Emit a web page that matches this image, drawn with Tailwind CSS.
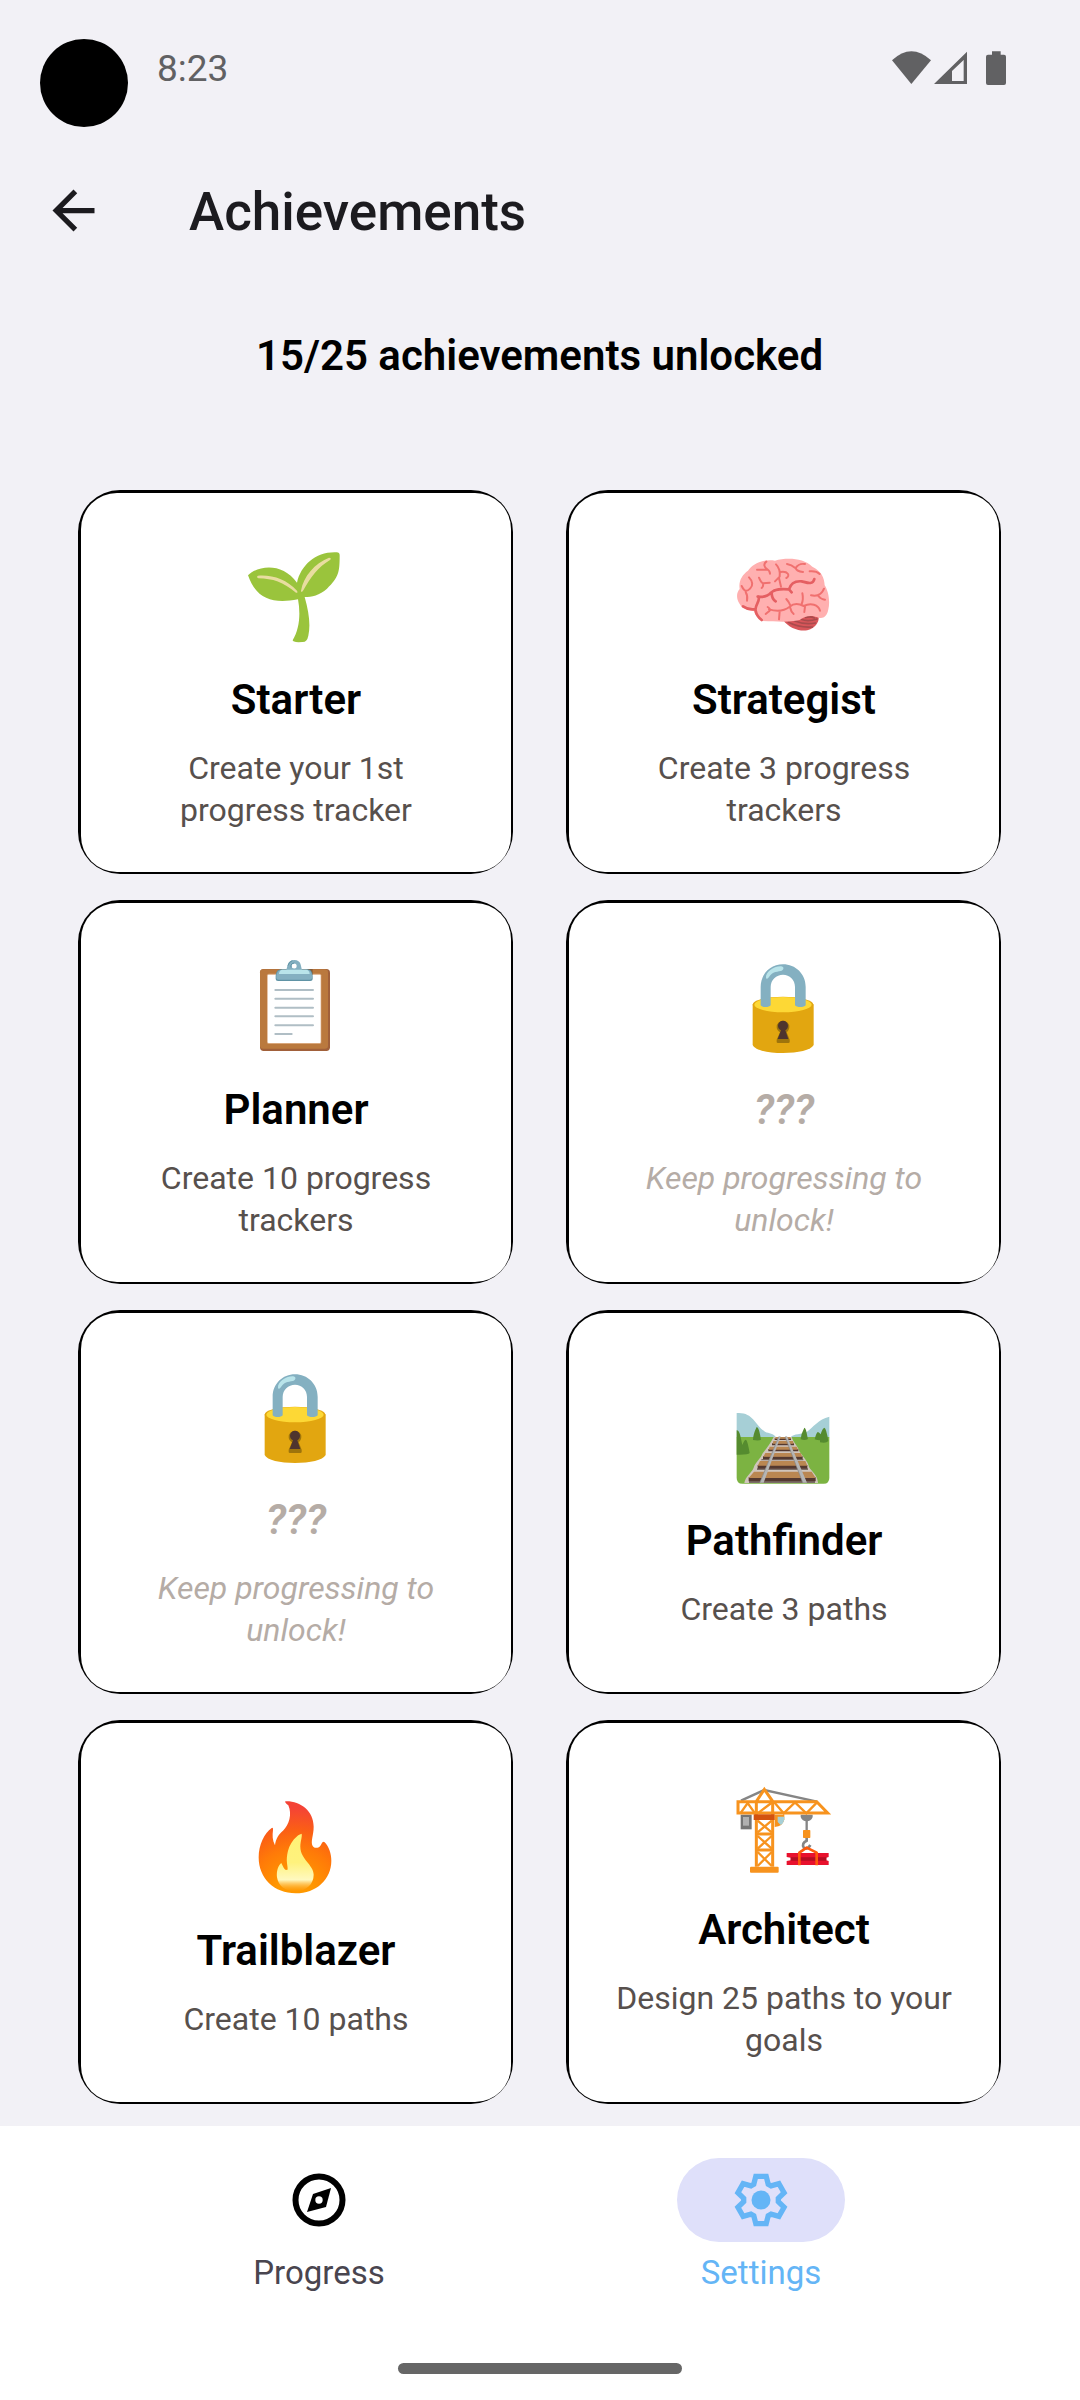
<!doctype html>
<html lang="en">
<head>
    <meta charset="utf-8" />
    <title>Achievements</title>
    <meta name="viewport" content="width=device-width, initial-scale=1.0" />
    <script src="https://cdn.jsdelivr.net/npm/@tailwindcss/browser@4"></script>
</head>

<body class="flex flex-col min-h-screen bg-[#f2f1f6] font-['Roboto',sans-serif] text-black">

    <!-- Shared icons -->
    <svg class="hidden" aria-hidden="true">
        <symbol id="lock" viewBox="529 204 288 288">
            <path fill="#e2a610" d="M579 340V462C586 478 625 486 670 486S754 478 762 462V340Z" />
            <ellipse cx="670" cy="341" rx="91" ry="24" fill="#e2a610" />
            <ellipse cx="670" cy="341" rx="86" ry="23" fill="#fdd835" />
            <path fill="#84b0c1" d="M603 343V288C603 248 633 220 670 220S738 248 738 288V343C734 350 710 350 706 343V288C706 266 690 251 670 251S633 266 633 288V343C629 350 607 350 603 343Z" />
            <path fill="#b9e4ea" d="M619 261C617 244 642 225 664 226C674 227 674 237 664 240C647 243 637 244 628 258C624 264 620 265 619 261Z" />
            <path fill="#9e740b" d="M651 408A19 19 0 0 1 689 408C689 416 684 421 681 424L690 446V454Q689 456 686 456H655Q651 456 651 453V446L661 424C655 420 651 415 651 408Z" />
            <path fill="#4e342e" d="M655 404A15 15 0 0 1 685 404C685 411 682 415 677 418L686 444H654L664 418C658 415 655 411 655 404Z" />
        </symbol>
    </svg>

    <!-- Status bar -->
    <div class="flex items-start justify-between pl-10 pr-[74px] pt-[39px]">
        <div class="flex">
            <div class="size-[88px] rounded-full bg-black"></div>
            <span class="ml-[29px] mt-2 text-[37px] leading-[44px] text-[#616163]">8:23</span>
        </div>
        <svg class="mt-3 w-[114px] h-[34px]" viewBox="96 92 342 102" fill="#616163">
            <path d="M96 120Q154 66 213 120L154 191Z" />
            <path fill-rule="evenodd" d="M222 191L321 94V191ZM276 182H311V119L276 152Z" />
            <path d="M396 93H422V103H432Q438 103 438 109V188Q438 194 432 194H384Q378 194 378 188V109Q378 103 384 103H396Z" />
        </svg>
    </div>

    <!-- App bar -->
    <header class="flex items-center h-16 mt-[51px] pl-[42px]">
        <button type="button" aria-label="Back" class="size-[63px]">
            <svg class="size-full" viewBox="0 0 24 24" fill="#1c1b1f">
                <path d="M20 11H7.83l5.59-5.59L12 4l-8 8 8 8 1.41-1.41L7.83 13H20v-2z" />
            </svg>
        </button>
        <h1 class="ml-[84px] pt-1 text-[53px] leading-[64px] font-medium text-[#1c1b1f]">Achievements</h1>
    </header>

    <main class="flex-1 pl-[78px] pr-[79px] pb-5">
        <p class="mt-[86px] text-center text-[42px] leading-[56px] font-semibold">15/25 achievements unlocked</p>

        <ul class="grid grid-cols-2 gap-x-[53px] gap-y-[26px] mt-[106px]">
            <li class="flex rounded-[42px] bg-black pt-[3px] pl-[3px] pr-[2px] pb-[2px]">
                <div class="flex flex-col flex-1 items-center justify-center min-h-[379px] px-[46px] rounded-[36px] bg-white text-center">
                    <svg class="size-24 mt-[14px] mb-[27px]" viewBox="85 51 288 288">
                        <path fill="#9ac43c" d="M85 130C118 98 190 92 232 152C244 98 290 58 351 61Q360 61 360 70C360 120 357 137 322 170C300 190 276 195 255 195C268 240 273 280 266 311Q262 331 248 330Q219 332 219 325C240 290 243 245 235 202C160 216 110 202 85 130Z" />
                        <path fill="#e8dda0" d="M115 131C160 128 200 142 232 176Q236 183 229 182C190 150 160 140 116 139Q109 134 115 131Z" />
                        <path fill="#e8dda0" d="M244 176C252 132 285 94 328 77Q336 77 332 83C295 105 272 136 251 175Q245 184 244 176Z" />
                    </svg>
                    <h2 class="mb-[19px] text-[42px] leading-[56px] font-semibold">Starter</h2>
                    <p class="text-[32px] leading-[42px] text-[#57504d]">Create your 1st progress tracker</p>
                </div>
            </li>
            <li class="flex rounded-[42px] bg-black pt-[3px] pl-[3px] pr-[2px] pb-[2px]">
                <div class="flex flex-col flex-1 items-center justify-center min-h-[379px] px-[46px] rounded-[36px] bg-white text-center">
                    <svg class="size-24 mt-[14px] mb-[27px]" viewBox="109 81 288 288" fill="none" stroke-linecap="round" stroke-linejoin="round">
                        <path fill="#d8565a" d="M250 294C270 322 310 332 332 322C352 310 358 298 357 284L320 278Z" />
                        <path stroke="#a94b4d" stroke-width="5" d="M266 301Q300 318 338 315M286 297Q315 309 347 303M304 292Q325 300 352 291M318 286Q332 282 344 288" />
                        <path fill="#ffb0b0" d="M189 297C174 290 166 277 162 267C142 266 127 258 120 246C109 230 110 212 120 201C116 176 128 158 145 146C160 126 190 110 226 116C262 106 312 108 338 134C365 148 374 166 375 190C386 206 392 238 386 262C383 282 370 292 357 287C330 276 312 286 300 294C265 302 230 298 189 297Z" />
                        <g stroke="#f0706f" stroke-width="6">
                            <path d="M200 119C190 126 194 136 202 141C210 146 211 150 211 155M172 143C182 143 192 143 202 143" />
                            <path d="M148 166C160 178 160 192 152 199C142 209 135 211 126 192M138 210Q145 222 142 236" />
                            <path d="M178 167Q184 182 190 184L210 182M190 184Q192 194 186 198" />
                            <path d="M229 127C240 138 242 148 240 164L226 178M242 150C266 146 272 162 260 168M238 168L244 194" />
                            <path d="M262 126C274 128 282 134 288 139M316 126C300 124 294 128 288 138Q290 148 310 150M330 148Q350 146 360 156" />
                            <path d="M334 220C350 224 366 218 373 200M356 222Q364 232 376 233" />
                            <path d="M204 255Q216 262 208 268L198 276M208 262C228 268 252 268 270 254C284 242 300 246 312 252C334 242 356 248 361 266M260 231Q268 240 272 250M308 214Q312 232 306 246M316 254L314 270M272 258Q274 270 282 276M240 268L238 292" />
                        </g>
                        <path stroke="#e55f62" stroke-width="8" d="M174 224C192 226 204 224 214 212C226 200 244 200 268 202C272 188 282 176 306 178C322 182 340 190 344 171M268 202L276 211M216 212Q216 230 228 238M176 224C184 236 164 250 168 266C170 278 176 286 186 294M130 253Q146 264 164 262" />
                    </svg>
                    <h2 class="mb-[19px] text-[42px] leading-[56px] font-semibold">Strategist</h2>
                    <p class="text-[32px] leading-[42px] text-[#57504d]">Create 3 progress trackers</p>
                </div>
            </li>
            <li class="flex rounded-[42px] bg-black pt-[3px] pl-[3px] pr-[2px] pb-[2px]">
                <div class="flex flex-col flex-1 items-center justify-center min-h-[379px] px-[46px] rounded-[36px] bg-white text-center">
                    <svg class="size-24 mt-[14px] mb-[27px]" viewBox="85 84 288 288">
                        <rect x="121" y="114" width="210" height="246" rx="11" fill="#a1603a" />
                        <rect x="121" y="115" width="204" height="238" rx="9" fill="#ba793e" />
                        <rect x="142" y="128" width="163" height="211" rx="5" fill="#d9a77c" />
                        <rect x="144" y="131" width="159" height="205" rx="3" fill="#fff" />
                        <path fill="#855c38" d="M264 114H279V131H264Z" />
                        <path stroke="#b0bec5" stroke-width="6" stroke-linecap="round" d="M167 177H280M167 203H280M167 230H280M167 256H280M167 283H280M167 309H216" />
                        <path fill="#5f93a5" d="M168 134Q170 115 184 115H264Q277 115 279 134V144Q279 150 272 150H175Q168 150 168 144Z" />
                        <path fill="#84b0c1" fill-rule="evenodd" d="M200 116C204 108 202 87 224 87S243 108 247 116H264Q276 118 277 134V141Q277 146 270 146H177Q170 146 170 141V134Q172 118 184 116ZM216 105A7 7 0 0 0 231 105A7 7 0 0 0 216 105Z" />
                        <path fill="#b9e4ea" d="M188 116H260Q270 118 270 129H178Q178 118 188 116Z" />
                        <path stroke="#5f93a5" stroke-width="3" fill="none" d="M214 109V103Q216 96 224 96M205 104Q208 92 218 89" />
                    </svg>
                    <h2 class="mb-[19px] text-[42px] leading-[56px] font-semibold">Planner</h2>
                    <p class="text-[32px] leading-[42px] text-[#57504d]">Create 10 progress trackers</p>
                </div>
            </li>
            <li class="flex rounded-[42px] bg-black pt-[3px] pl-[3px] pr-[2px] pb-[2px]">
                <div class="flex flex-col flex-1 items-center justify-center min-h-[379px] px-[46px] rounded-[36px] bg-white text-center">
                    <svg class="size-24 mt-[14px] mb-[27px]"><use href="#lock" /></svg>
                    <h2 class="mb-[19px] text-[42px] leading-[56px] font-semibold italic text-[#b5aca6]">???</h2>
                    <p class="text-[32px] leading-[42px] italic text-[#b5aca6]">Keep progressing to unlock!</p>
                </div>
            </li>
            <li class="flex rounded-[42px] bg-black pt-[3px] pl-[3px] pr-[2px] pb-[2px]">
                <div class="flex flex-col flex-1 items-center justify-center min-h-[379px] px-[46px] rounded-[36px] bg-white text-center">
                    <svg class="size-24 mt-[14px] mb-[27px]"><use href="#lock" /></svg>
                    <h2 class="mb-[19px] text-[42px] leading-[56px] font-semibold italic text-[#b5aca6]">???</h2>
                    <p class="text-[32px] leading-[42px] italic text-[#b5aca6]">Keep progressing to unlock!</p>
                </div>
            </li>
            <li class="flex rounded-[42px] bg-black pt-[3px] pl-[3px] pr-[2px] pb-[2px]">
                <div class="flex flex-col flex-1 items-center justify-center min-h-[379px] px-[46px] rounded-[36px] bg-white text-center">
                    <svg class="size-24 mt-[14px] mb-[27px]" viewBox="109 27 288 288">
                        <path fill="#a6cfd6" d="M111 96C160 92 166 132 196 152C208 158 222 156 229 169H111ZM389 107C356 114 340 140 322 152C306 162 282 156 273 169H389Z" />
                        <path fill="#7cb342" d="M111 168H389V290Q389 308 372 308H128Q111 308 111 290Z" />
                        <path fill="#558b2f" d="M111 148Q118 148 122 164L128 192Q134 176 139 176Q144 180 150 216Q146 222 111 221ZM171 138C178 138 182 164 184 176Q178 180 160 177Q160 160 171 138ZM314 140C320 142 322 162 325 174Q316 180 303 175Q304 158 314 140ZM374 140Q380 142 386 180Q380 188 361 184V178Q352 178 345 175Q350 154 355 153Q360 155 363 160Q368 142 374 140Z" />
                        <path fill="#d0c5bc" d="M222 168H276C282 186 296 198 300 212C318 236 326 246 328 258C336 272 354 282 355 306H134C138 284 156 276 162 260C166 244 184 232 188 218C202 202 214 184 222 168Z" />
                        <path fill="#7b6d66" d="M186 234H311V238H184ZM172 262H325V267H172ZM148 300H346V306H148Z" />
                        <path fill="#543930" d="M225 172H274V177H225ZM217 187H283V193H217ZM206 204H296V211H206ZM190 226H309V235H190ZM174 252H323V263H174ZM147 289H348V301H147Z" />
                        <path fill="#ba8752" d="M228 168H272L274 173H226ZM221 180H280L282 188H219ZM210 197H291L295 206H207ZM197 216H303L308 227H191ZM181 240H317L323 254H174ZM163 272H336L348 291H147Z" />
                        <path fill="#b5b5b5" d="M237 166H243L192 305H180ZM256 166H262L322 305H309Z" />
                        <path stroke="#858585" stroke-width="2" d="M237 168L181 304M256 168L309 304" />
                    </svg>
                    <h2 class="mb-[19px] text-[42px] leading-[56px] font-semibold">Pathfinder</h2>
                    <p class="text-[32px] leading-[42px] text-[#57504d]">Create 3 paths</p>
                </div>
            </li>
            <li class="flex rounded-[42px] bg-black pt-[3px] pl-[3px] pr-[2px] pb-[2px]">
                <div class="flex flex-col flex-1 items-center justify-center min-h-[379px] px-[46px] rounded-[36px] bg-white text-center">
                    <svg class="size-24 mt-[14px] mb-[27px]" viewBox="85 60 288 288">
                        <defs>
                            <radialGradient id="flame" gradientUnits="userSpaceOnUse" cx="226" cy="340" r="270">
                                <stop offset=".2" stop-color="#ff9800" />
                                <stop offset=".5" stop-color="#ff7a08" />
                                <stop offset=".7" stop-color="#fb6014" />
                                <stop offset=".95" stop-color="#f44336" />
                            </radialGradient>
                            <linearGradient id="core" x1="0" y1="0" x2="0" y2="1">
                                <stop offset="0" stop-color="#fff176" />
                                <stop offset=".5" stop-color="#fff27d" />
                                <stop offset=".8" stop-color="#fff9c0" />
                                <stop offset="1" stop-color="#ff9800" stop-opacity=".3" />
                            </linearGradient>
                        </defs>
                        <path fill="url(#flame)" d="M197 64C240 62 282 92 282 140C282 166 272 184 279 198C284 206 298 206 304 194Q309 182 315 187C328 200 335 222 335 242C335 298 290 340 228 340C164 340 117 296 117 232C117 194 134 160 156 144Q161 142 160 150C158 166 158 180 166 196C168 176 178 162 190 152C208 134 218 104 206 76Q194 67 197 64Z" />
                        <path fill="url(#core)" d="M246 161C228 166 198 198 202 250C204 266 206 270 200 270C192 268 190 258 185 249C176 256 170 272 172 292C176 318 196 334 226 334C260 334 282 312 282 284C282 254 242 238 242 200C242 184 248 170 246 161Z" />
                    </svg>
                    <h2 class="mb-[19px] text-[42px] leading-[56px] font-semibold">Trailblazer</h2>
                    <p class="text-[32px] leading-[42px] text-[#57504d]">Create 10 paths</p>
                </div>
            </li>
            <li class="flex rounded-[42px] bg-black pt-[3px] pl-[3px] pr-[2px] pb-[2px]">
                <div class="flex flex-col flex-1 items-center justify-center min-h-[379px] px-[46px] rounded-[36px] bg-white text-center">
                    <svg class="size-24 mt-[14px] mb-[27px]" viewBox="79 27 288 288" fill="none">
                        <path stroke="#858585" stroke-width="7" d="M94 92L164 60L322 95M291 150V182" />
                        <path fill="#757575" d="M93 134H126V178H93Z" />
                        <path fill="#b0b0b0" d="M100 141H118V167H100Z" />
                        <path fill="#858585" d="M273 134H309V141Q304 154 291 154T273 141Z" />
                        <path fill="#f7931e" d="M195 134H224V148Q220 170 195 171Z" />
                        <path fill="#a6cfd6" d="M204 140H224V148Q221 162 213 165L204 156Z" />
                        <path stroke="#f7931e" stroke-width="9" d="M140 290V94L164 58L189 94V290M85 95H321L354 129H85ZM136 192H193M136 240H193" />
                        <path stroke="#f7931e" stroke-width="7" d="M92 130L114 99L136 130M144 130L189 96M193 96L222 130L256 97L290 130L322 97M144 152L186 187M186 152L144 187M144 198L186 236M186 198L144 236M144 246L186 288M186 246L144 288" />
                        <rect x="132" y="133" width="63" height="17" fill="#d3520e" />
                        <rect x="121" y="290" width="86" height="18" rx="3" fill="#f7931e" />
                        <path stroke="#858585" stroke-width="8" d="M291 202V212C282 216 276 224 283 234Q294 240 302 225" />
                        <rect x="280" y="180" width="22" height="24" rx="2" fill="#f7931e" />
                        <path fill="#e8112d" d="M231 249H357V261L350 263V271L357 273V285H231V273L243 271V263L231 261Z" />
                        <path fill="#b50d22" d="M243 262H350V272H243Z" />
                        <path stroke="#ff5a0a" stroke-width="8" stroke-linejoin="round" d="M269 286V248L291 233L321 248V286" />
                    </svg>
                    <h2 class="mb-[19px] text-[42px] leading-[56px] font-semibold">Architect</h2>
                    <p class="text-[32px] leading-[42px] text-[#57504d]">Design 25 paths to your goals</p>
                </div>
            </li>
        </ul>
    </main>

    <!-- Bottom navigation -->
    <footer class="bg-white pt-8 pb-[26px]">
        <nav class="flex px-[98px]">
            <a href="#" class="flex flex-col flex-1 items-center text-[33px] leading-[42px] text-[#49454f]">
                <span class="flex items-center justify-center w-[168px] h-[84px] mb-[10px] rounded-full">
                    <svg class="size-16" viewBox="-32 -32 64 64">
                        <circle r="23.5" fill="none" stroke="#000" stroke-width="6" />
                        <path d="M12 -12L7 7L-12 12L-6 -6Z" />
                        <circle r="3.7" fill="#fff" />
                    </svg>
                </span>
                Progress
            </a>
            <a href="#" aria-current="page" class="flex flex-col flex-1 items-center text-[33px] leading-[42px] text-[#64b5f6]">
                <span class="flex items-center justify-center w-[168px] h-[84px] mb-[10px] rounded-full bg-[#dfe0fa]">
                    <svg class="size-16" viewBox="-32 -32 64 64">
                        <path fill="none" stroke="#64b5f6" stroke-width="5.3" d="M-7.2 -15.8L-5.2 -23.7H5.2L7.2 -15.8L10.1 -14.1L17.9 -16.4L23.1 -7.3L17.3 -1.7V1.7L23.1 7.3L17.9 16.4L10.1 14.1L7.2 15.8L5.2 23.7H-5.2L-7.2 15.8L-10.1 14.1L-17.9 16.4L-23.1 7.3L-17.3 1.7V-1.7L-23.1 -7.3L-17.9 -16.4L-10.1 -14.1Z" />
                        <circle r="9.5" fill="#64b5f6" />
                    </svg>
                </span>
                Settings
            </a>
        </nav>
        <div class="w-[284px] h-[11px] mx-auto mt-[69px] rounded-full bg-[#666]"></div>
    </footer>
</body>
</html>
